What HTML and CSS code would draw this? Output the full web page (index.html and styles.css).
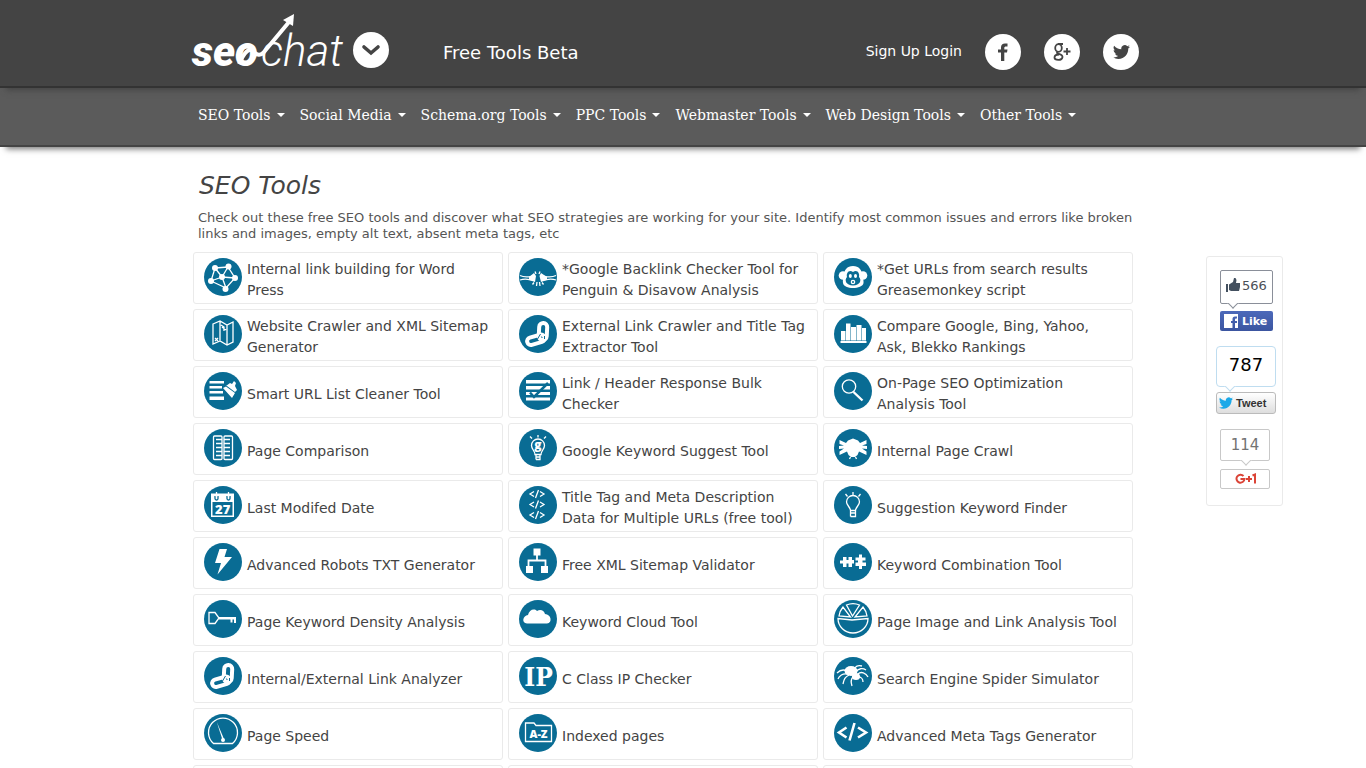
FILE: index.html
```html
<!DOCTYPE html>
<html lang="en">
<head>
<meta charset="utf-8">
<meta name="viewport" content="width=device-width, initial-scale=1">
<title>SEO Chat - Free Tools</title>
<link rel="stylesheet" href="styles.css">
</head>
<body>
<svg class="sprite" aria-hidden="true">
  <symbol id="i-network" viewBox="0 0 38 38">
    <g class="ln"><path d="M11 10L24 9L31 20L22 30L7 23ZM18 19L11 10M18 19L24 9M18 19L31 20M18 19L22 30M18 19L7 23"/></g>
    <g class="fl"><circle cx="11" cy="10" r="3"/><circle cx="24.500" cy="8.500" r="3"/><circle cx="31" cy="20" r="3"/><circle cx="21.500" cy="31" r="3"/><circle cx="7" cy="23" r="3"/><circle cx="18" cy="19" r="3"/></g>
  </symbol>
  <symbol id="i-map" viewBox="0 0 38 38">
    <g class="ln"><path d="M9 9L16 6L23 10L29 7V27L23 30L16 26L9 29ZM16 6V26M23 10V30M17 10l3 2v4M18 12l4 3"/><path d="M11 23l3 3M14 23l-3 3"/></g>
  </symbol>
  <symbol id="i-cleaner" viewBox="0 0 38 38">
    <g class="fl"><path d="M5.500 9H20V11.500H5.500ZM5.500 14H18V16.500H5.500ZM5.500 19H19V21.500H5.500ZM5.500 24.500H20V28H5.500ZM22 14L26 11L28 12L30 9L32 11L31 14L33 18L31 20L23 14ZM19 16L22 14.500L31 21L28 26Z"/></g>
  </symbol>
  <symbol id="i-backlink" viewBox="0 0 38 38">
    <g class="ln"><path d="M1 17.500C6 20 9 19 14 18M1 22C7 20 10 22 15 22M37 17.500C32 20 29 19 24 18M37 22C31 20 28 22 23 22"/></g>
    <g class="fl"><path d="M10 19L15 15L17 18L16 24L10 22ZM28 19L22 15L20.500 18L22 24L28 22Z"/></g>
    <g class="ln"><path d="M17 16l-1-2.500M20 16l1-2.500M18 24l-.500 4M20.500 24l.500 4M15 24.500l-1.500 2M23 24.500l1.500 2"/></g>
  </symbol>
  <symbol id="i-chain" viewBox="0 0 38 38">
    <g fill="none" stroke="#fff" stroke-width="4"><rect x="20" y="8" width="8" height="17" rx="4" transform="rotate(3 24 16)"/><rect x="8" y="21" width="18" height="7.500" rx="3.750" transform="rotate(-16 17 25)"/></g>
    <path d="M18.500 24L21.500 19M25.500 24V21" fill="none" stroke="#096c94" stroke-width="1"/>
  </symbol>
  <symbol id="i-check" viewBox="0 0 38 38">
    <g class="fl"><path d="M7 8H31V11.500H7ZM7 14H31V17.500H7ZM7 20H31V23H7ZM7 25.500H31V28.500H7Z"/></g>
    <path d="M11 20.500L15 25L29 11" fill="none" stroke="#096c94" stroke-width="2.500"/>
  </symbol>
  <symbol id="i-monkey" viewBox="0 0 38 38">
    <g class="fl"><circle cx="9" cy="17.500" r="4.300"/><circle cx="29" cy="17.500" r="4.300"/><path d="M19 8C25 8 28 12 28 17C28 20 30 21 29.500 25C29 28.500 24 30 19 30C14 30 9.500 28.500 9 25C8.500 21 10 20 10 17C10 12 13 8 19 8Z"/></g>
    <path d="M19 14C15 11 12 15 13 19C10 22 12 27.500 19 27.500C26 27.500 28 22 25 19C26 15 23 11 19 14Z" fill="#096c94"/>
    <g class="fl"><ellipse cx="16.300" cy="18" rx="1.500" ry="2"/><ellipse cx="21.500" cy="18" rx="1.500" ry="2"/><circle cx="19" cy="24" r="2.300"/></g>
    <circle cx="19" cy="24" r="1" fill="#096c94"/>
  </symbol>
  <symbol id="i-bars" viewBox="0 0 38 38">
    <g class="fl"><path d="M7 16H11.500V25.500H7ZM12 8.500H16.500V25.500H12ZM17 12H22V25.500H17ZM22.500 10H27.500V25.500H22.500ZM28 13H32V25.500H28ZM6.500 26H32.500V28H6.500Z"/></g>
  </symbol>
  <symbol id="i-search" viewBox="0 0 38 38">
    <g class="ln"><circle cx="15" cy="14.500" r="6.700"/></g>
    <path d="M19.500 20L28.500 28.500" fill="none" stroke="#fff" stroke-width="2.400"/>
  </symbol>
  <symbol id="i-compare" viewBox="0 0 38 38">
    <g class="ln"><rect x="9.500" y="7" width="8.500" height="23.500" rx="1"/><rect x="20" y="7" width="8.500" height="23.500" rx="1"/><path d="M12 10.500H18M12 14.500H18M12 18.500H18M12 22.500H18M12 26.500H18M20 10.500H26M20 14.500H26M20 18.500H26M20 22.500H26M20 26.500H26"/></g>
  </symbol>
  <symbol id="i-gbulb" viewBox="0 0 38 38">
    <g class="ln"><path d="M16 25.500C16 22 12.500 20 12.500 16.500A6.500 6.500 0 0 1 25.500 16.500C25.500 20 22 22 22 25.500ZM16.500 28H21.500M17 30.500H21V25M17 30.500V25M19 8.500V6M13 9.500l-2-2M25 9.500l2-2"/></g>
    <text x="19" y="20" class="ic-text" font-size="12">g</text>
  </symbol>
  <symbol id="i-spiderfat" viewBox="0 0 38 38">
    <g class="fl"><path d="M12 14L14 11.500L19 9.500L24 11.500L26 14L32.500 11V15L28 16.500L33 17V20L28 19.500L32.500 22.500V26L25 22.500L23.500 26L21 28H17L14.500 26L13 22.500L5.500 26V22.500L10 19.500L5 20V17L10 16.500L5.500 15V11Z"/></g>
    <g class="ln"><path d="M16.500 28l-1 2M21.500 28l1 2"/></g>
  </symbol>
  <symbol id="i-calendar" viewBox="0 0 38 38">
    <g class="fl"><path d="M7 7.500H30V31H7ZM8.500 16V29.500H28.500V16Z" fill-rule="evenodd"/></g>
    <g fill="none" stroke="#096c94" stroke-width="1.300"><path d="M11 10V12.500A1.500 1.500 0 0 0 14 12.500V10M23 10V12.500A1.500 1.500 0 0 0 26 12.500V10"/></g>
    <g class="ln"><path d="M12.500 6v5M24.500 6v5"/></g>
    <text x="18.700" y="27.500" class="ic-text" font-size="13">27</text>
  </symbol>
  <symbol id="i-tags" viewBox="0 0 38 38">
    <g class="ln"><path d="M15 5.500l-4 2.500l4 2.500M21 5.500l4 2.500l-4 2.500M19.500 4l-3 8M15 16l-4 2.500l4 2.500M21 16l4 2.500l-4 2.500M19.500 14.500l-3 8M15 26.500l-4 2.500l4 2.500M21 26.500l4 2.500l-4 2.500M19.500 25l-3 8"/></g>
  </symbol>
  <symbol id="i-bulb" viewBox="0 0 38 38">
    <g class="ln"><path d="M16.500 24.500C16.500 21.500 12.500 19 12.500 16A6.500 6.500 0 0 1 25.500 16C25.500 19 21.500 21.500 21.500 24.500ZM16.500 27H21.500M16.500 30.500H21.500V24.500M16.500 30.500V24.500M19 9V6M13.500 10.500l-2-2.500M24.500 10.500l2-2.500"/></g>
  </symbol>
  <symbol id="i-bolt" viewBox="0 0 38 38"><g class="fl"><path d="M15.500 6H23L20.500 14H28L13.500 31.500L17 20H11Z"/></g></symbol>
  <symbol id="i-sitemap" viewBox="0 0 38 38">
    <g class="fl"><path d="M14.500 5.500H21.500V12.500H14.500ZM7 23H14V30H7ZM22 23H29V30H22Z"/></g>
    <g class="ln th"><path d="M18 12V17.500M9.500 23V17.500H26.500V23"/></g>
  </symbol>
  <symbol id="i-puzzle" viewBox="0 0 38 38">
    <g class="fl"><path d="M9 14H12.500V17H14.500V14H18V17H20V20.500H18V24H14.500V20.500H12.500V24H9V20.500H6V17.500H9ZM21.500 14.500H25V11.500H28V14.500H31.500V17.500H28.500V19.500H32V23H28V26H25V23H21.500V19.500H24V17.500H21.500Z"/></g>
  </symbol>
  <symbol id="i-key" viewBox="0 0 38 38">
    <g class="ln"><path d="M5 12.500H11L15 18L11 23.500H5Z"/></g>
    <g class="fl"><path d="M14 17H32V23H30V19.500H28.500V22.500H26.500V19.500H15Z"/></g>
  </symbol>
  <symbol id="i-cloud" viewBox="0 0 38 38"><g class="fl"><path d="M8 23.500C2 23 4 15.500 9 15C10 10 15 8 18 11C21 9 25 10 26 14C32 14 34 23 28 23.500Z"/></g></symbol>
  <symbol id="i-pie" viewBox="0 0 38 38">
    <g class="ln"><path d="M4 18.500A15 14.500 0 0 0 34 18.500L18 20ZM9 7A18 18 0 0 0 5 16L16.500 17ZM12.500 5A16 16 0 0 1 25.500 5L18.500 16ZM29 7A18 18 0 0 1 33 16L21 17Z"/></g>
  </symbol>
  <symbol id="i-ip" viewBox="0 0 38 38"><text x="19.500" y="28.500" class="ic-serif" font-size="26">IP</text></symbol>
  <symbol id="i-spider" viewBox="0 0 38 38">
    <g class="fl"><ellipse cx="17" cy="14" rx="6.500" ry="5"/><ellipse cx="22" cy="19.500" rx="4" ry="3.500"/></g>
    <g class="ln"><path d="M13 14C9 12 6 13 3 16M13 17C9 16 5 19 4 22M15 18C11 20 10 22 9 27M19 20C16 23 17 26 18 29M20 13C21 9 24 8 28 9M22 15C24 11 29 11 32 13M24 17C27 14 32 16 34 20M25 20C27 20 29 22 29 25"/></g>
  </symbol>
  <symbol id="i-gauge" viewBox="0 0 38 38">
    <g class="ln"><path d="M9.500 29.500A14.500 14.500 0 1 1 28.500 29.500Z"/></g>
    <g class="fl"><path d="M12.800 8L20 25L18.500 26Z"/><circle cx="19" cy="26" r="2"/></g>
  </symbol>
  <symbol id="i-az" viewBox="0 0 38 38">
    <g class="ln"><path d="M6.500 27.500V9H15L17 11.500H32.500V27.500Z"/></g>
    <text x="19.500" y="23.500" class="ic-text" font-size="11">A-Z</text>
  </symbol>
  <symbol id="i-code" viewBox="0 0 38 38">
    <path d="M12.500 13.500L5 18.500L12.500 23.500M24 13.500L32 18.500L24 23.500M20.500 9L15.500 26.500" fill="none" stroke="#fff" stroke-width="2.600"/>
  </symbol>
  <symbol id="i-bird" viewBox="0 0 24 24"><path d="M23.950 4.570a10 10 0 0 1-2.820.77 4.960 4.960 0 0 0 2.160-2.720c-.95.560-2 .960-3.130 1.180a4.920 4.920 0 0 0-8.380 4.480C7.690 8.100 4.070 6.130 1.640 3.160a4.920 4.920 0 0 0 1.520 6.570 4.900 4.900 0 0 1-2.230-.610v.060a4.920 4.920 0 0 0 3.950 4.830 5 5 0 0 1-2.210.080 4.940 4.940 0 0 0 4.600 3.420A9.870 9.870 0 0 1 0 19.540a13.990 13.990 0 0 0 7.550 2.210c9.050 0 14-7.500 14-13.980 0-.21 0-.42-.020-.630a9.940 9.940 0 0 0 2.460-2.550z"/></symbol>
</svg>

<header class="top">
  <div class="wrap top-row">
    <a class="logo" href="#" aria-label="SEO Chat">
      <svg width="150" height="56" viewBox="0 0 150 56">
        <text x="-1" y="52" class="logo-bold">seo</text>
        <text x="68" y="52" class="logo-light">chat</text>
        <path d="M46 50Q54 32 60 37Q66 44 71 38L96 8" fill="none" stroke="#fff" stroke-width="4"/>
        <path d="M101 0L90 6L100 12Z" fill="#fff"/>
      </svg>
    </a>
    <button class="round" type="button" aria-label="Open menu">
      <svg width="36" height="36" viewBox="0 0 36 36"><path d="M11 15L18 21L25 15" fill="none" stroke="#444" stroke-width="3.600" stroke-linecap="round"/></svg>
    </button>
    <div class="beta">Free Tools Beta</div>
    <nav class="account" aria-label="Account"><a href="#">Sign Up</a> <a href="#">Login</a></nav>
    <div class="social">
      <a class="round" href="#" aria-label="Facebook"><svg width="36" height="36" viewBox="0 0 36 36"><path d="M16 27V18.500H13V15.500H16V13.500C16 11 17.500 9.500 20 9.500H22.500V12.500H21C19.800 12.500 19.300 13 19.300 14V15.500H22.500L22 18.500H19.300V27Z" fill="#444"/></svg></a>
      <a class="round" href="#" aria-label="Google Plus"><svg width="36" height="36" viewBox="0 0 36 36"><g fill="none" stroke="#444" stroke-width="1.800"><ellipse cx="14.500" cy="14" rx="3.300" ry="3.800"/><path d="M14 10H19M14 18C10 20 19 19.500 18.500 23C18 27 10.500 26.500 10.500 23.500C10.500 21 13 20.500 15 20.500M19.500 17.500H26.500M23 14V21"/></g></svg></a>
      <a class="round" href="#" aria-label="Twitter"><svg width="36" height="36" viewBox="0 0 36 36"><use href="#i-bird" x="10" y="9" width="17" height="18" fill="#444"/></svg></a>
    </div>
  </div>
</header>

<nav class="menu" aria-label="Tools">
  <ul class="wrap menu-row">
    <li><a href="#">SEO Tools</a></li>
    <li><a href="#">Social Media</a></li>
    <li><a href="#">Schema.org Tools</a></li>
    <li><a href="#">PPC Tools</a></li>
    <li><a href="#">Webmaster Tools</a></li>
    <li><a href="#">Web Design Tools</a></li>
    <li><a href="#">Other Tools</a></li>
  </ul>
</nav>

<div class="page">
  <main class="content">
    <h1>SEO Tools</h1>
    <p class="intro">Check out these free SEO tools and discover what SEO strategies are working for your site. Identify most common issues and errors like broken links and images, empty alt text, absent meta tags, etc</p>
    <ul class="tools">
      <li><a href="#"><svg class="ic"><use href="#i-network"/></svg><span>Internal link building for Word Press</span></a></li>
      <li><a href="#"><svg class="ic"><use href="#i-backlink"/></svg><span>*Google Backlink Checker Tool for Penguin &amp; Disavow Analysis</span></a></li>
      <li><a href="#"><svg class="ic"><use href="#i-monkey"/></svg><span>*Get URLs from search results Greasemonkey script</span></a></li>
      <li><a href="#"><svg class="ic"><use href="#i-map"/></svg><span>Website Crawler and XML Sitemap Generator</span></a></li>
      <li><a href="#"><svg class="ic"><use href="#i-chain"/></svg><span>External Link Crawler and Title Tag Extractor Tool</span></a></li>
      <li><a href="#"><svg class="ic"><use href="#i-bars"/></svg><span>Compare Google, Bing, Yahoo, Ask, Blekko Rankings</span></a></li>
      <li><a href="#"><svg class="ic"><use href="#i-cleaner"/></svg><span>Smart URL List Cleaner Tool</span></a></li>
      <li><a href="#"><svg class="ic"><use href="#i-check"/></svg><span>Link / Header Response Bulk Checker</span></a></li>
      <li><a href="#"><svg class="ic"><use href="#i-search"/></svg><span>On-Page SEO Optimization Analysis Tool</span></a></li>
      <li><a href="#"><svg class="ic"><use href="#i-compare"/></svg><span>Page Comparison</span></a></li>
      <li><a href="#"><svg class="ic"><use href="#i-gbulb"/></svg><span>Google Keyword Suggest Tool</span></a></li>
      <li><a href="#"><svg class="ic"><use href="#i-spiderfat"/></svg><span>Internal Page Crawl</span></a></li>
      <li><a href="#"><svg class="ic"><use href="#i-calendar"/></svg><span>Last Modifed Date</span></a></li>
      <li><a href="#"><svg class="ic"><use href="#i-tags"/></svg><span>Title Tag and Meta Description Data for Multiple URLs (free tool)</span></a></li>
      <li><a href="#"><svg class="ic"><use href="#i-bulb"/></svg><span>Suggestion Keyword Finder</span></a></li>
      <li><a href="#"><svg class="ic"><use href="#i-bolt"/></svg><span>Advanced Robots TXT Generator</span></a></li>
      <li><a href="#"><svg class="ic"><use href="#i-sitemap"/></svg><span>Free XML Sitemap Validator</span></a></li>
      <li><a href="#"><svg class="ic"><use href="#i-puzzle"/></svg><span>Keyword Combination Tool</span></a></li>
      <li><a href="#"><svg class="ic"><use href="#i-key"/></svg><span>Page Keyword Density Analysis</span></a></li>
      <li><a href="#"><svg class="ic"><use href="#i-cloud"/></svg><span>Keyword Cloud Tool</span></a></li>
      <li><a href="#"><svg class="ic"><use href="#i-pie"/></svg><span>Page Image and Link Analysis Tool</span></a></li>
      <li><a href="#"><svg class="ic"><use href="#i-chain"/></svg><span>Internal/External Link Analyzer</span></a></li>
      <li><a href="#"><svg class="ic"><use href="#i-ip"/></svg><span>C Class IP Checker</span></a></li>
      <li><a href="#"><svg class="ic"><use href="#i-spider"/></svg><span>Search Engine Spider Simulator</span></a></li>
      <li><a href="#"><svg class="ic"><use href="#i-gauge"/></svg><span>Page Speed</span></a></li>
      <li><a href="#"><svg class="ic"><use href="#i-az"/></svg><span>Indexed pages</span></a></li>
      <li><a href="#"><svg class="ic"><use href="#i-code"/></svg><span>Advanced Meta Tags Generator</span></a></li>
      <li></li><li></li><li></li>
    </ul>
  </main>
  <aside class="share" aria-label="Share">
    <div class="bubble fb-count"><svg width="14" height="14" viewBox="0 0 14 14" aria-hidden="true"><path d="M0 6H2V14H0ZM3 6.500L7 4L8 0H9.500L10.500 2L10 5H14V9L13 13H5L3 12Z" fill="#43505f"/></svg>566</div>
    <button type="button" class="fb-like"><svg width="14" height="14" viewBox="0 0 14 14" aria-hidden="true"><path d="M0 0H14V14H11V9H13V7H11V5.500Q11 4.500 12 4.500H13V2.500H11Q8.500 2.500 8.500 5V7H7V9H8.500V14H0Z" fill="#fff"/></svg>Like</button>
    <div class="bubble tw-count">787</div>
    <button type="button" class="tw-btn"><svg width="14" height="12" viewBox="0 2 24 20" aria-hidden="true"><use href="#i-bird" width="24" height="24" fill="#1ba9e8"/></svg>Tweet</button>
    <div class="bubble gp-count">114</div>
    <button type="button" class="gp-btn" aria-label="G+1"><svg width="22" height="12" viewBox="0 0 22 12" aria-hidden="true"><g fill="none" stroke="#db4437" stroke-width="2"><path d="M8.500 3A4 4 0 1 0 9.500 6H5.500M11 6H17M14 3V9M17.500 2.500L20 1.500V10.500"/></g></svg></button>
  </aside>
</div>
</body>
</html>
```
FILE: styles.css
```css
* { box-sizing: border-box; }

body {
  margin: 0;
  background: #fff;
  color: #444;
  font-family: "DejaVu Sans", sans-serif;
  font-size: 14px;
}

a { color: inherit; text-decoration: none; }
ul { list-style: none; margin: 0; padding: 0; }
button { font-family: inherit; cursor: pointer; }

.sprite { display: none; }

.wrap {
  max-width: 980px;
  margin: 0 auto;
}

/* Header */
.top {
  position: relative;
  z-index: 2;
  background: #444;
  color: #fff;
  border-bottom: 2px solid #333;
  box-shadow: 0 8px 6px -6px #444;
}

.top-row {
  display: flex;
  align-items: center;
  min-height: 86px;
  padding: 14px 34px 0 0;
}

.logo { margin: 0 10px 16px 0; line-height: 0; }
.logo svg { overflow: visible; }
.logo text { fill: #fff; font-family: Roboto, sans-serif; font-style: italic; }
.logo-bold { font-weight: 900; font-size: 42px; }
.logo-light { font-weight: 300; font-size: 44px; }

.round {
  display: block;
  width: 36px;
  height: 36px;
  padding: 0;
  border: 0;
  border-radius: 50%;
  background: #fff;
}
.round svg { display: block; }

.beta { margin: 4px auto 0 54px; font-size: 18px; }
.account { margin: 2px 23px 0 0; }
.social { display: flex; gap: 23px; margin-top: 4px; }

/* Menu */
.menu {
  position: relative;
  z-index: 1;
  background: #5b5b5b;
  border-bottom: 2px solid #444;
  box-shadow: 0 8px 6px -6px #777;
}

.menu-row {
  display: flex;
  flex-wrap: wrap;
  gap: 15px;
  padding: 17px 5px 20px;
}

.menu a {
  display: flex;
  align-items: center;
  gap: 6px;
  color: #fff;
  font-family: "DejaVu Serif", serif;
  line-height: 20px;
}

.menu a::after {
  content: "";
  border: 4px solid transparent;
  border-top-color: #fff;
  border-bottom: 0;
}

/* Page */
.page {
  display: grid;
  grid-template-columns: 1fr minmax(0, 980px) 1fr;
}

.content { grid-column: 2; padding-right: 40px; }

h1 {
  margin: 24px 6px 0;
  font-size: 25px;
  font-weight: 400;
  font-style: italic;
  line-height: 30px;
}

.intro {
  margin: 9px 0 10px 5px;
  color: #555;
  font-size: 13px;
  line-height: 16px;
}

.tools {
  display: grid;
  grid-template-columns: repeat(3, 1fr);
  gap: 5px;
}

.tools li {
  min-height: 52px;
  border: 1px solid #eaeaea;
  border-radius: 3px;
}

.tools a {
  display: flex;
  align-items: center;
  gap: 5px;
  min-height: 50px;
  padding: 4px 10px 0;
  line-height: 21px;
}

.ic {
  flex: none;
  align-self: flex-start;
  width: 38px;
  height: 38px;
  margin-top: 1px;
  border-radius: 50%;
  background: #096c94;
}

.ln { fill: none; stroke: #fff; stroke-width: 1.3; }
.th { stroke-width: 1.8; }
.fl { fill: #fff; }
.ic-text { fill: #fff; font-family: "Open Sans", sans-serif; font-weight: 800; text-anchor: middle; }
.ic-serif { fill: #fff; font-family: "DejaVu Serif Condensed", "DejaVu Serif", serif; font-weight: 700; text-anchor: middle; }

/* Share box */
.share {
  grid-column: 3;
  align-self: start;
  display: flex;
  flex-direction: column;
  align-items: flex-start;
  width: 77px;
  margin: 109px 0 0 33px;
  padding: 13px 9px 16px;
  border: 1px solid #eaeaea;
  border-radius: 3px;
}

.bubble {
  position: relative;
  display: flex;
  align-items: center;
  justify-content: center;
  border: 1px solid;
  background: #fff;
}

.bubble::after {
  content: "";
  position: absolute;
  bottom: -4px;
  width: 6px;
  height: 6px;
  border: 1px solid;
  border-color: transparent #8a8f99 #8a8f99 transparent;
  background: #fff;
  transform: rotate(45deg);
}

.fb-count {
  gap: 2px;
  width: 53px;
  height: 34px;
  margin: 0 4px 7px;
  padding-bottom: 4px;
  border-color: #8a8f99;
  border-radius: 2px;
  color: #4b4f56;
  font-size: 13px;
}
.fb-count::after { left: 8px; }

.fb-like {
  display: flex;
  align-items: center;
  gap: 4px;
  width: 53px;
  height: 20px;
  margin: 0 4px 15px;
  padding: 0 4px;
  border: 0;
  border-radius: 2px;
  background: linear-gradient(#4c69ba, #3b55a0);
  color: #fff;
  font-size: 11px;
  font-weight: 700;
}

.tw-count {
  width: 60px;
  height: 41px;
  margin-bottom: 5px;
  padding-bottom: 4px;
  border-color: #bfddf0;
  border-radius: 4px;
  color: #000;
  font-size: 18px;
}
.tw-count::after { left: 9px; border-color: transparent #bfddf0 #bfddf0 transparent; }

.tw-btn {
  display: flex;
  align-items: center;
  gap: 3px;
  width: 60px;
  height: 22px;
  margin-bottom: 15px;
  padding: 0 2px;
  border: 1px solid #bbb;
  border-radius: 3px;
  background: linear-gradient(#fff, #dedede);
  color: #333;
  font-family: "Liberation Sans", sans-serif;
  font-size: 11px;
  font-weight: 700;
}

.gp-count {
  width: 50px;
  height: 32px;
  margin: 0 4px 8px;
  border-color: #c8c8c8;
  border-radius: 2px;
  color: #737373;
  font-size: 15px;
}
.gp-count::after { left: 21px; border-color: transparent #c8c8c8 #c8c8c8 transparent; }

.gp-btn {
  display: flex;
  align-items: center;
  justify-content: center;
  width: 50px;
  height: 20px;
  margin: 0 4px;
  padding: 0 0 0 2px;
  border: 1px solid #c8c8c8;
  border-radius: 2px;
  background: #fff;
}

/* Narrow screens */
@media (max-width: 1100px) {
  .page { display: block; padding: 0 15px; }
  .content { padding-right: 0; }
  .share { margin: 20px 0; }
  .wrap { padding-left: 15px; padding-right: 15px; }
}

@media (max-width: 760px) {
  .top-row { flex-wrap: wrap; row-gap: 10px; }
  .tools { grid-template-columns: 1fr; }
}
```
